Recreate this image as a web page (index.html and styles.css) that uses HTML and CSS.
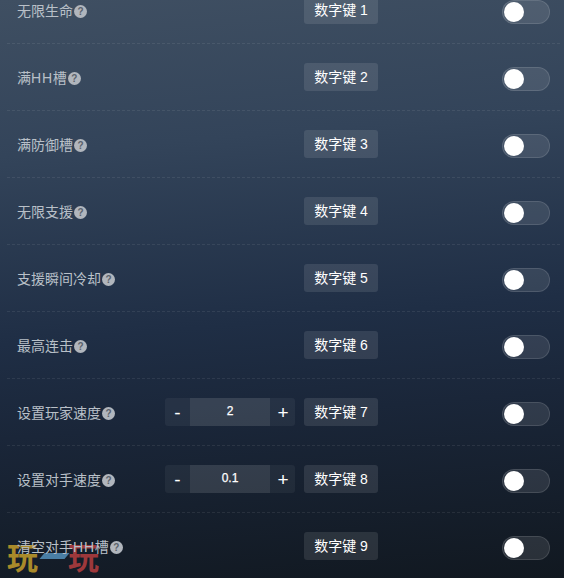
FILE: index.html
```html
<!DOCTYPE html>
<html lang="zh-CN">
<head>
  <meta charset="UTF-8">
  <title>修改器选项</title>
  <link rel="stylesheet" href="styles.css">
</head>
<body>
  <div class="watermark">
    <span class="wm-gold">玩</span>
    <span class="wm-dash"></span>
    <span class="wm-red">玩</span>
  </div>
  <div class="list">
    <div class="row">
      <div class="label">无限生命<span class="help">?</span></div>
      <div class="key">数字键 1</div>
      <div class="toggle"><span class="knob"></span></div>
    </div>
    <div class="row">
      <div class="label">满<span class="latin">HH</span>槽<span class="help">?</span></div>
      <div class="key">数字键 2</div>
      <div class="toggle"><span class="knob"></span></div>
    </div>
    <div class="row">
      <div class="label">满防御槽<span class="help">?</span></div>
      <div class="key">数字键 3</div>
      <div class="toggle"><span class="knob"></span></div>
    </div>
    <div class="row">
      <div class="label">无限支援<span class="help">?</span></div>
      <div class="key">数字键 4</div>
      <div class="toggle"><span class="knob"></span></div>
    </div>
    <div class="row">
      <div class="label">支援瞬间冷却<span class="help">?</span></div>
      <div class="key">数字键 5</div>
      <div class="toggle"><span class="knob"></span></div>
    </div>
    <div class="row">
      <div class="label">最高连击<span class="help">?</span></div>
      <div class="key">数字键 6</div>
      <div class="toggle"><span class="knob"></span></div>
    </div>
    <div class="row">
      <div class="label">设置玩家速度<span class="help">?</span></div>
      <div class="stepper">
        <span class="step">-</span>
        <span class="value">2</span>
        <span class="step">+</span>
      </div>
      <div class="key">数字键 7</div>
      <div class="toggle"><span class="knob"></span></div>
    </div>
    <div class="row">
      <div class="label">设置对手速度<span class="help">?</span></div>
      <div class="stepper">
        <span class="step">-</span>
        <span class="value">0.1</span>
        <span class="step">+</span>
      </div>
      <div class="key">数字键 8</div>
      <div class="toggle"><span class="knob"></span></div>
    </div>
    <div class="row last">
      <div class="label">清空对手<span class="latin">HH</span>槽<span class="help">?</span></div>
      <div class="key">数字键 9</div>
      <div class="toggle"><span class="knob"></span></div>
    </div>
  </div>
</body>
</html>
```
FILE: styles.css
```css
html, body {
  height: 100%;
}
body {
  margin: 0;
  height: 578px;
  overflow: hidden;
  position: relative;
  font-family: "Liberation Sans", "Noto Sans CJK SC", sans-serif;
  background: linear-gradient(175deg, #3f4f62 0%, #33445a 25%, #1f2e45 55%, #1a2639 70%, #111820 100%);
  color: #b9c0c8;
}
.list {
  position: relative;
  margin: -23px 4px 0 7px;
}
.row {
  display: flex;
  align-items: center;
  height: 66px;
  padding: 0 10px;
  border-bottom: 1px dashed rgba(255, 255, 255, 0.08);
}
.row.last {
  border-bottom: none;
}
.label {
  flex: 1;
  display: flex;
  align-items: center;
  font-size: 14px;
  line-height: 20px;
  margin-top: 2px;
}
.latin {
  letter-spacing: 0.8px;
}
.help {
  width: 13px;
  height: 13px;
  margin-left: 1px;
  border-radius: 50%;
  background: #b1b6bd;
  color: #5a626c;
  font-size: 10px;
  font-weight: bold;
  line-height: 13px;
  text-align: center;
}
.key {
  width: 74px;
  height: 28px;
  line-height: 28px;
  text-align: center;
  font-size: 14px;
  color: #fff;
  background: rgba(255, 255, 255, 0.1);
  border-radius: 3px;
}
.stepper {
  display: flex;
  width: 130px;
  height: 28px;
  margin-right: 9px;
  border-radius: 3px;
  overflow: hidden;
  color: #fff;
  background: rgba(255, 255, 255, 0.05);
}
.step {
  width: 25px;
  text-align: center;
  font-size: 19px;
  line-height: 29px;
}
.step:last-child {
  width: 24px;
  padding-left: 1px;
}
.value {
  width: 80px;
  text-align: center;
  font-size: 12px;
  line-height: 27px;
  -webkit-text-stroke: 0.25px #fff;
  background: rgba(255, 255, 255, 0.08);
}
.toggle {
  box-sizing: border-box;
  width: 48px;
  height: 24px;
  margin: 4px 0 0 124px;
  padding: 1px;
  border-radius: 12px;
  background: rgba(255, 255, 255, 0.1);
  border: 1px solid rgba(255, 255, 255, 0.12);
}
.knob {
  display: block;
  width: 20px;
  height: 20px;
  border-radius: 50%;
  background: #fff;
}
.watermark {
  position: absolute;
  left: 7px;
  top: 539px;
  display: flex;
  align-items: center;
  font-family: "Noto Sans CJK SC", sans-serif;
  font-size: 31px;
  font-weight: 700;
  line-height: 34px;
}
.wm-gold {
  color: #a98a2a;
}
.wm-red {
  color: #9e383b;
}
.wm-dash {
  width: 25px;
  height: 6px;
  margin: 0 1px 0 4px;
  background: #4a7fa5;
  transform: skewX(-40deg);
}
```
